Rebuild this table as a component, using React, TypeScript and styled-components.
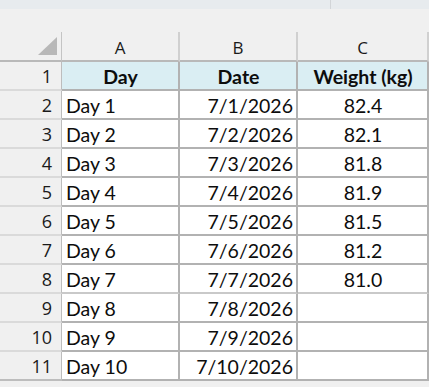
import React from 'react'
import styled, { createGlobalStyle } from 'styled-components'

const GlobalStyle = createGlobalStyle`
  html, body {
    margin: 0;
    padding: 0;
    background: #ffffff;
  }
`

type Row = {
  day: string
  date: string
  weight: string
}

const rows: Row[] = [
  { day: 'Day 1', date: '7/1/2026', weight: '82.4' },
  { day: 'Day 2', date: '7/2/2026', weight: '82.1' },
  { day: 'Day 3', date: '7/3/2026', weight: '81.8' },
  { day: 'Day 4', date: '7/4/2026', weight: '81.9' },
  { day: 'Day 5', date: '7/5/2026', weight: '81.5' },
  { day: 'Day 6', date: '7/6/2026', weight: '81.2' },
  { day: 'Day 7', date: '7/7/2026', weight: '81.0' },
  { day: 'Day 8', date: '7/8/2026', weight: '' },
  { day: 'Day 9', date: '7/9/2026', weight: '' },
  { day: 'Day 10', date: '7/10/2026', weight: '' },
]

const Page = styled.div`
  width: 429px;
  height: 387px;
  overflow: hidden;
  background: #f0f0f0;
  display: flex;
  flex-direction: column;
`

const FormulaBar = styled.div`
  height: 9px;
  display: flex;
  background: #e7ebee;
`

const FormulaName = styled.div`
  width: 330px;
  border-right: 1px solid #d2d5d8;
`

const Spacer = styled.div`
  height: 23px;
  background: #f0f0f0;
`

const Sheet = styled.div`
  display: grid;
  grid-template-columns: 62px 118px 118px 131px;
  grid-auto-rows: 29px;
  grid-template-rows: 30px;
`

const Corner = styled.div`
  display: flex;
  align-items: flex-end;
  justify-content: flex-end;
  padding: 0 4px 5px 0;
  background: #f0f0f0;
  border-right: 1px solid #c4c4c4;
  border-bottom: 2px solid #b9b9b9;
`

const ColHead = styled.div`
  display: flex;
  align-items: center;
  justify-content: center;
  background: #f0f0f0;
  border-right: 2px solid #d0d0d0;
  border-bottom: 2px solid #b9b9b9;
  font-family: 'Open Sans', 'Noto Sans', sans-serif;
  font-size: 17px;
  color: #1a1a1a;
  padding-top: 3px;
`

const RowHead = styled.div<{ $last?: boolean }>`
  display: flex;
  align-items: center;
  justify-content: flex-end;
  padding-right: 9px;
  background: #f0f0f0;
  border-right: 1px solid #bdbdbd;
  border-bottom: 2px solid ${(p) => (p.$last ? '#bdbdbd' : '#dadada')};
  font-family: 'Open Sans', 'Noto Sans', sans-serif;
  font-size: 18px;
  color: #1a1a1a;
`

const Cell = styled.div<{ $align?: 'left' | 'right' | 'center'; $head?: boolean; $soft?: boolean }>`
  display: flex;
  align-items: center;
  justify-content: ${(p) =>
    p.$align === 'right' ? 'flex-end' : p.$align === 'center' ? 'center' : 'flex-start'};
  padding: 1px 3px 0 4px;
  background: ${(p) => (p.$head ? '#daeef3' : '#ffffff')};
  border-right: 2px solid #b2b2b2;
  border-bottom: 2px solid ${(p) => (p.$soft ? '#c9c9c9' : '#b2b2b2')};
  font-family: Lato, 'Noto Sans', sans-serif;
  font-size: 19.5px;
  font-weight: ${(p) => (p.$head ? 700 : 400)};
  color: #0d0d0d;
  white-space: nowrap;
  overflow: hidden;
`

const CornerMark = () => (
  <svg width="19" height="18" viewBox="0 0 19 18">
    <polygon points="19,0 19,18 0,18" fill="#b8b8b8" />
  </svg>
)

const App = () => (
  <>
    <GlobalStyle />
    <Page>
      <FormulaBar>
        <FormulaName />
      </FormulaBar>
      <Spacer />
      <Sheet>
        <Corner>
          <CornerMark />
        </Corner>
        <ColHead>A</ColHead>
        <ColHead>B</ColHead>
        <ColHead>C</ColHead>

        <RowHead>1</RowHead>
        <Cell $head $align="center">Day</Cell>
        <Cell $head $align="center">Date</Cell>
        <Cell $head $align="center">Weight (kg)</Cell>

        {rows.map((r, i) => (
          <React.Fragment key={r.day}>
            <RowHead $last={i === rows.length - 1}>{i + 2}</RowHead>
            <Cell $soft={i === 6}>{r.day}</Cell>
            <Cell $align="right" $soft={i === 6}>{r.date}</Cell>
            <Cell $align="center" $soft={i === 6}>{r.weight}</Cell>
          </React.Fragment>
        ))}
      </Sheet>
    </Page>
  </>
)

export default App
